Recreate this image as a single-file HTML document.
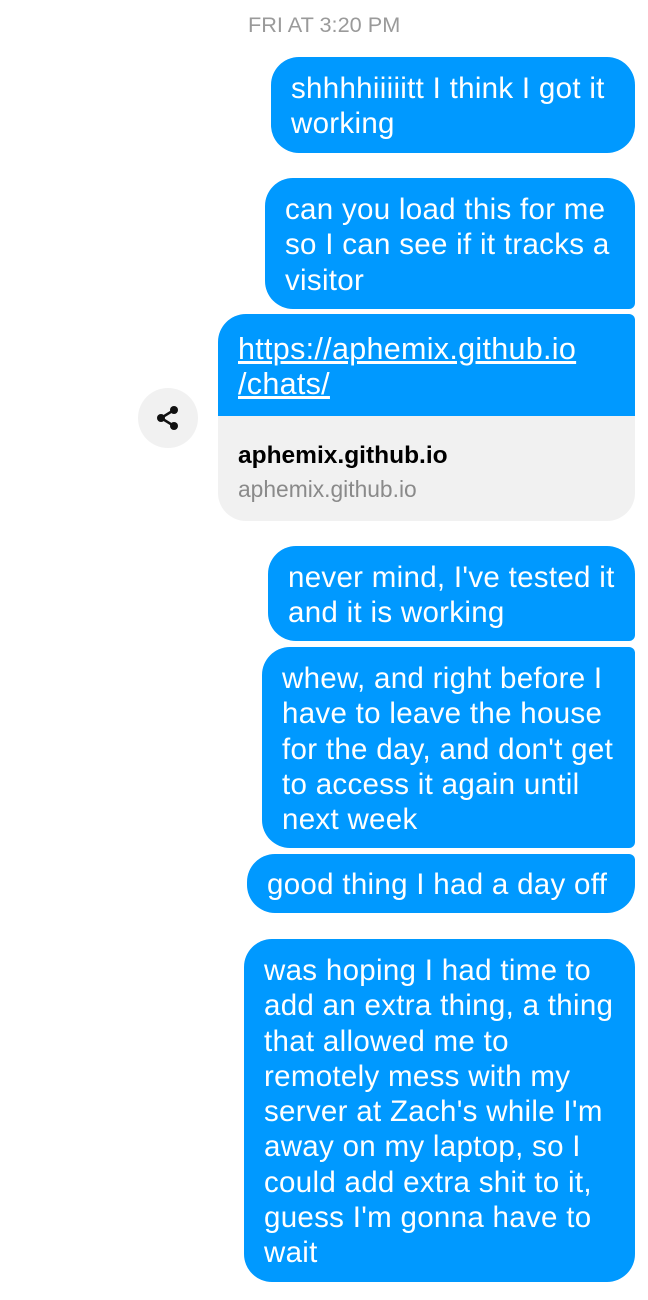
<!DOCTYPE html>
<html><head><meta charset="utf-8"><style>
body{margin:0;width:648px;height:1300px;background:#fff;position:relative;overflow:hidden;font-family:"Liberation Sans",sans-serif}
.ts{position:absolute;left:248px;top:12px;font-size:21.7px;color:#9a9a9a;line-height:26px}
.b{position:absolute;right:13px;background:#0099ff;color:#fff;font-size:29.5px;letter-spacing:0.3px;line-height:35.3px;padding:14px 0 0 20px;box-sizing:border-box;white-space:nowrap;border-radius:28px}
.share{position:absolute;left:138px;top:388px;width:60px;height:60px;border-radius:50%;background:#f1f1f1}
.share svg{position:absolute;left:17px;top:17px}
.link{position:absolute;left:218px;top:314px;width:417px;height:207px;border-radius:28px 6px 28px 28px;overflow:hidden;background:#f1f1f1}
.link .top{height:102px;background:#0099ff;color:#fff;font-size:30.5px;letter-spacing:0.3px;line-height:35.3px;padding:18px 0 0 20px;box-sizing:border-box;text-decoration:underline;white-space:nowrap}
.link .t1{position:absolute;left:20px;top:128px;font-size:24.5px;color:#000;font-weight:bold}
.link .t2{position:absolute;left:20px;top:162px;font-size:22.8px;color:#8a8a8a}
</style></head><body>
<div class="ts">FRI AT 3:20 PM</div>
<div class="b" style="left:271px;top:57px;height:96px">shhhhiiiiitt I think I got it<br>working</div>
<div class="b" style="left:265px;top:178px;height:131px;border-radius:28px 28px 6px 28px">can you load this for me<br>so I can see if it tracks a<br>visitor</div>
<div class="share"><svg width="26" height="26" viewBox="0 0 26 26"><g fill="#111"><circle cx="19" cy="5" r="4"/><circle cx="6" cy="13" r="4"/><circle cx="19" cy="21" r="4"/></g><path d="M19 5L6 13L19 21" stroke="#111" stroke-width="2.5" fill="none"/></svg></div>
<div class="link"><div class="top">https://aphemix.github.io<br>/chats/</div><div class="t1">aphemix.github.io</div><div class="t2">aphemix.github.io</div></div>
<div class="b" style="left:268px;top:546px;height:95px;border-radius:28px 28px 6px 28px">never mind, I've tested it<br>and it is working</div>
<div class="b" style="left:262px;top:647px;height:201px;border-radius:28px 6px 6px 28px">whew, and right before I<br>have to leave the house<br>for the day, and don't get<br>to access it again until<br>next week</div>
<div class="b" style="left:247px;top:854px;height:59px;padding-top:13px;border-radius:28px 6px 28px 28px">good thing I had a day off</div>
<div class="b" style="left:244px;top:939px;height:343px">was hoping I had time to<br>add an extra thing, a thing<br>that allowed me to<br>remotely mess with my<br>server at Zach's while I'm<br>away on my laptop, so I<br>could add extra shit to it,<br>guess I'm gonna have to<br>wait</div>
</body></html>
